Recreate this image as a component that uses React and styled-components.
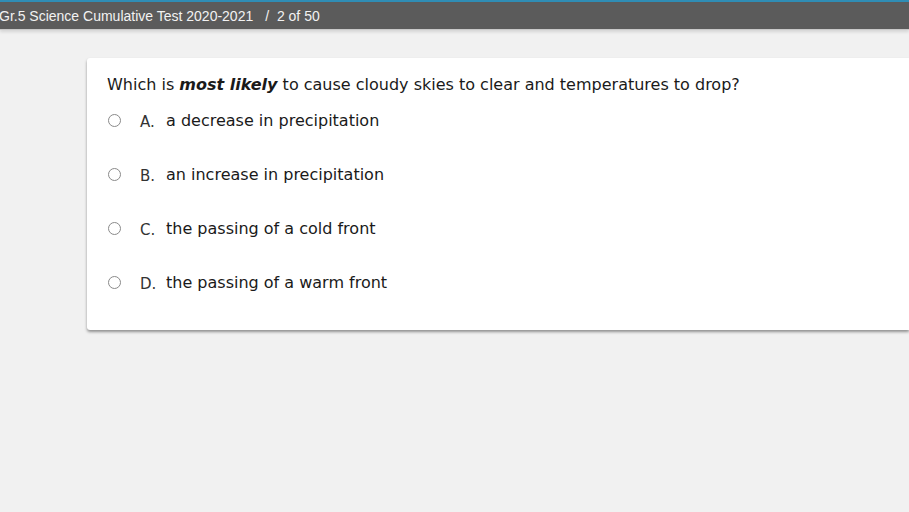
import React from "react";
import styled, { createGlobalStyle } from "styled-components";

const GlobalStyle = createGlobalStyle`
  html, body {
    margin: 0;
    padding: 0;
    background: #f1f1f1;
    overflow: hidden;
  }
`;

const Page = styled.div`
  width: 909px;
  height: 512px;
  background: #f1f1f1;
  display: flex;
  flex-direction: column;
`;

const TopBar = styled.header`
  height: 27px;
  border-top: 2px solid #2f8db5;
  border-bottom: 1px solid #c9c9c9;
  background: #5b5b5b;
  display: flex;
  align-items: center;
  font-family: "Liberation Sans", Arial, sans-serif;
  font-size: 14px;
  color: #f2f2f2;
  white-space: nowrap;
  box-shadow: 0 2px 3px rgba(0, 0, 0, 0.12);
`;

const Title = styled.span`
  margin-left: -1px;
`;

const Counter = styled.span`
  margin-left: 12px;
`;

const Content = styled.main`
  flex: 1;
  padding: 28px 0 0 87px;
`;

const Card = styled.section`
  background: #ffffff;
  border-radius: 3px 0 0 3px;
  box-shadow: 0 2px 3px rgba(0, 0, 0, 0.4);
  padding: 17px 0 38px 20px;
  font-family: "DejaVu Sans", Verdana, sans-serif;
  color: #1a1a1a;
`;

const Question = styled.p`
  margin: 0 0 15px 0;
  font-size: 16px;
  line-height: 20px;
`;

const Options = styled.ul`
  list-style: none;
  margin: 0;
  padding: 0;
  display: flex;
  flex-direction: column;
  gap: 34px;
`;

const Option = styled.li`
  display: flex;
  align-items: center;
  height: 20px;
`;

const Radio = styled.span`
  width: 13px;
  height: 13px;
  border: 1px solid #8a8a8a;
  border-radius: 50%;
  box-sizing: border-box;
  margin: 0 19px 0 1px;
  flex: none;
`;

const Letter = styled.span`
  width: 26px;
  font-size: 15px;
  position: relative;
  top: 2px;
  color: #333;
`;

const AnswerText = styled.span`
  font-size: 16px;
`;

const options = [
  ["A.", "a decrease in precipitation"],
  ["B.", "an increase in precipitation"],
  ["C.", "the passing of a cold front"],
  ["D.", "the passing of a warm front"],
];

export default function App() {
  return (
    <Page>
      <GlobalStyle />
      <TopBar>
        <Title>Gr.5 Science Cumulative Test 2020-2021</Title>
        <Counter>/&nbsp;&nbsp;2 of 50</Counter>
      </TopBar>
      <Content>
        <Card>
          <Question>
            Which is <b><i>most likely</i></b> to cause cloudy skies to clear and temperatures to drop?
          </Question>
          <Options>
            {options.map(([letter, text]) => (
              <Option key={letter}>
                <Radio />
                <Letter>{letter}</Letter>
                <AnswerText>{text}</AnswerText>
              </Option>
            ))}
          </Options>
        </Card>
      </Content>
    </Page>
  );
}
